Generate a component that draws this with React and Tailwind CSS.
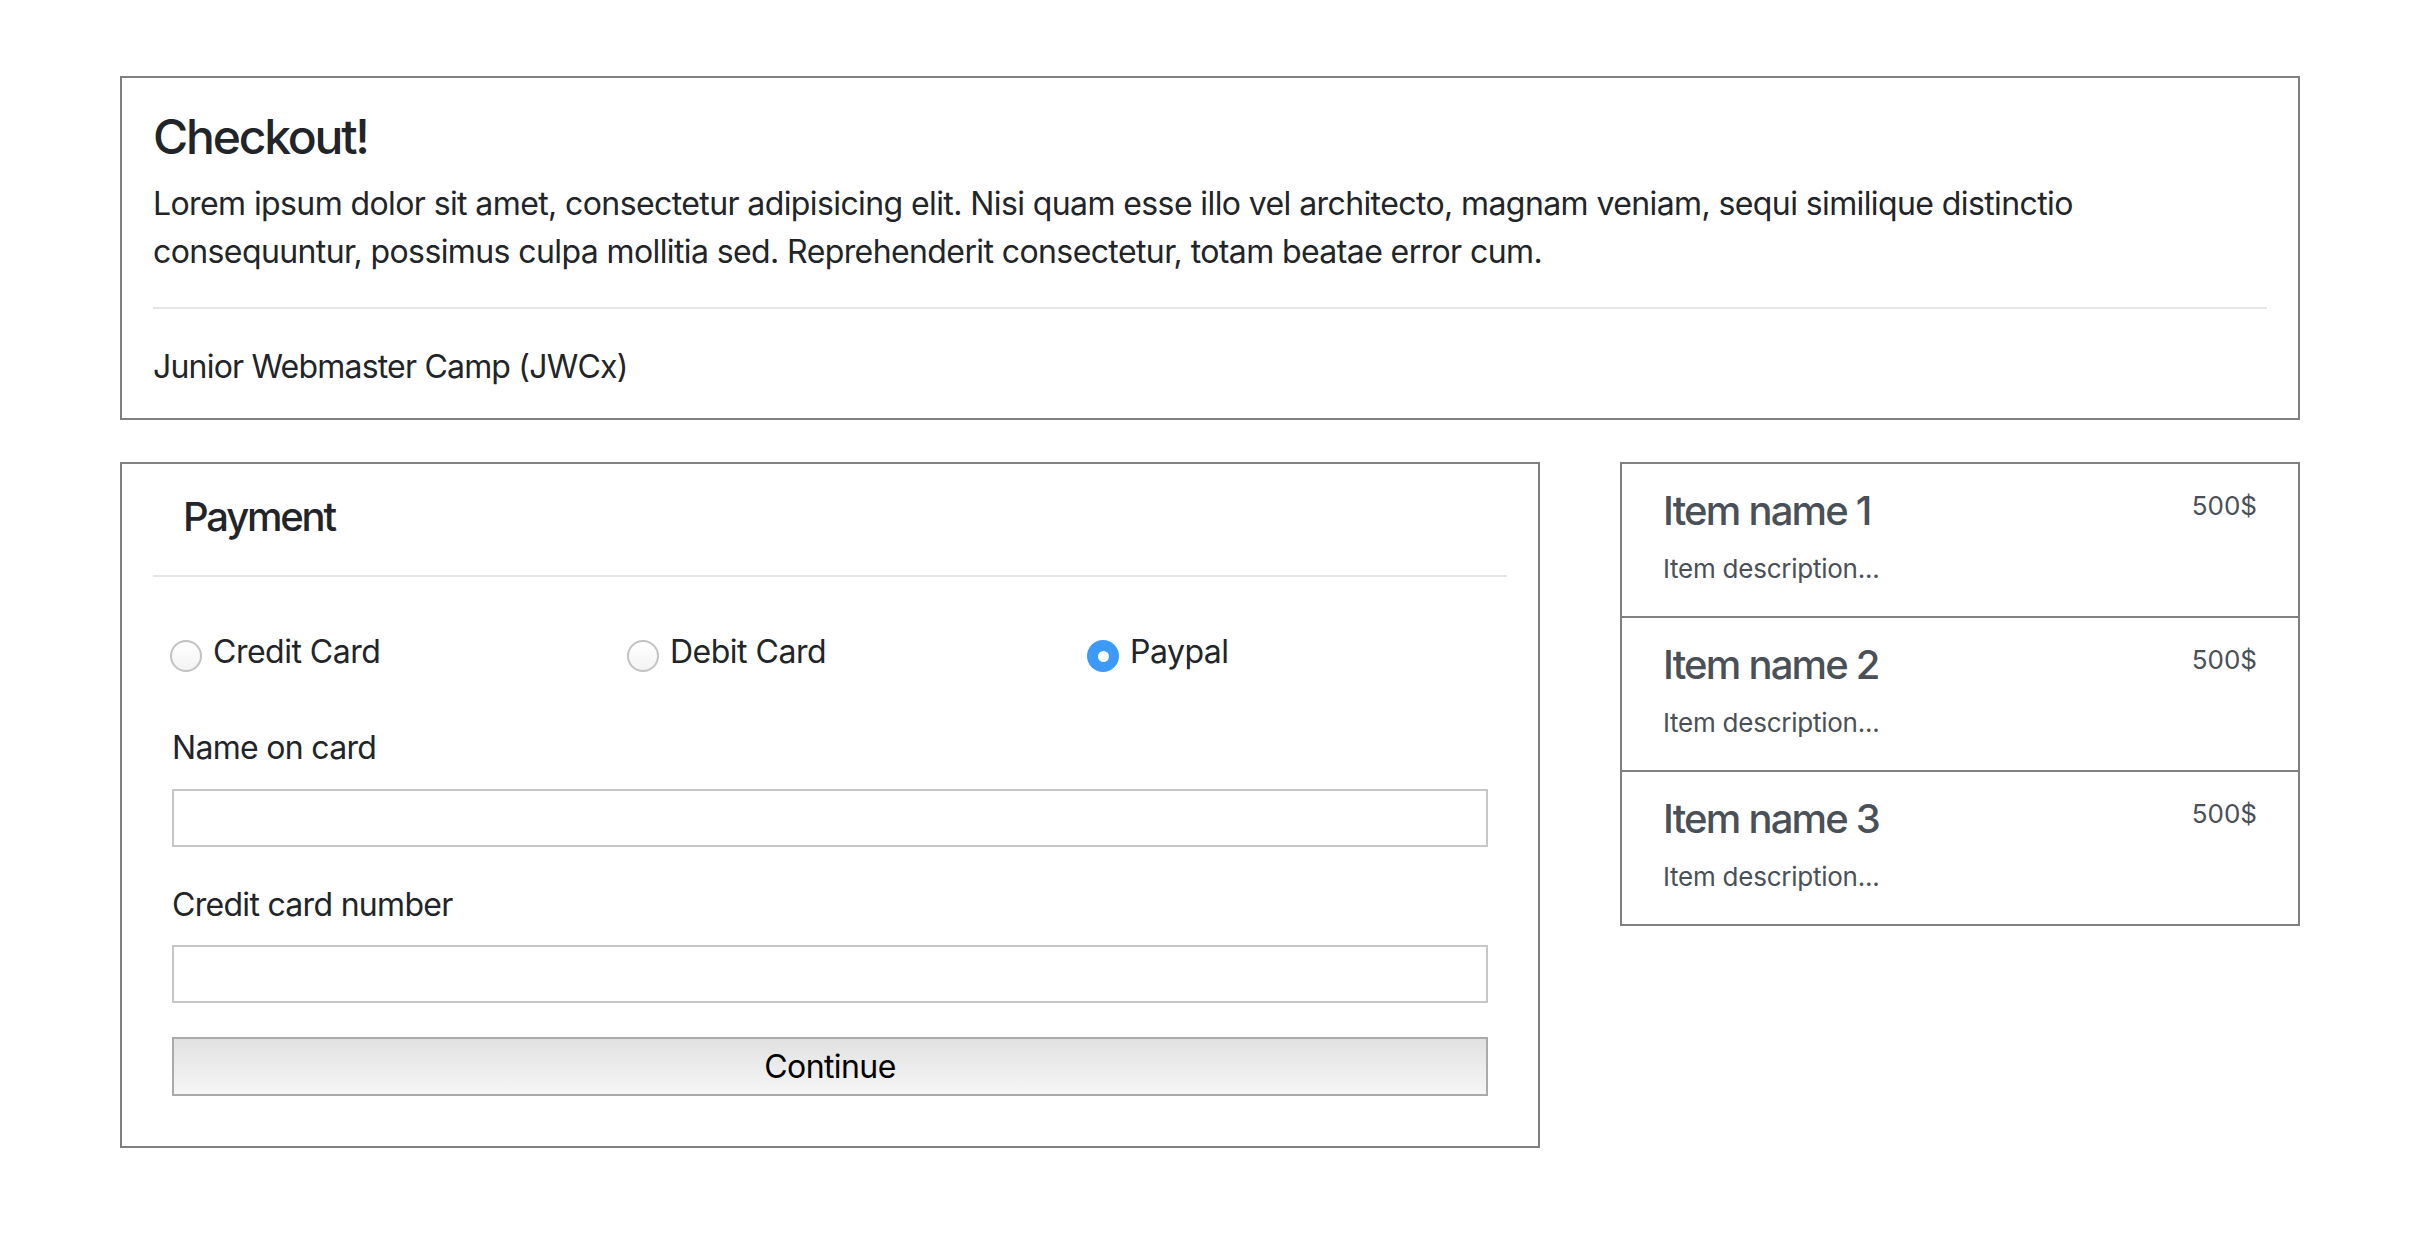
import React from "react";

const items = [
  { name: "Item name 1", price: "500$" },
  { name: "Item name 2", price: "500$" },
  { name: "Item name 3", price: "500$" },
];

function Radio({ label, checked, width }) {
  return (
    <label className={`flex items-start gap-[11px] ${width}`}>
      {checked ? (
        <span className="mt-[12px] flex h-[32px] w-[32px] items-center justify-center rounded-full bg-[#3c9afa]">
          <span className="h-[11px] w-[11px] rounded-full bg-white" />
        </span>
      ) : (
        <span className="mt-[12px] h-[32px] w-[32px] rounded-full border-2 border-[#c2c2c2] bg-linear-to-b from-white to-[#f3f3f3]" />
      )}
      <span className="text-[32px] leading-[48px] tracking-[-0.5px]">{label}</span>
    </label>
  );
}

export default function App() {
  return (
    <div
      className="min-h-screen bg-white pl-[120px] pt-[76px] text-[#212529]"
      style={{ fontFamily: "Inter, 'Noto Sans', sans-serif" }}
    >
      <div className="w-[2180px]">
        <div className="border-2 border-[#808080] px-[31px] pb-[27px] pt-[30px]">
          <h4 className="text-[48px] font-medium leading-[58px] tracking-[-2.2px]">Checkout!</h4>
          <p className="mt-[14px] max-w-[2010px] text-[32px] leading-[48px] tracking-[-0.6px]">
            Lorem ipsum dolor sit amet, consectetur adipisicing elit. Nisi quam esse illo vel architecto, magnam
            veniam, sequi similique distinctio consequuntur, possimus culpa mollitia sed. Reprehenderit consectetur,
            totam beatae error cum.
          </p>
          <div className="mt-[31px] h-[2px] bg-[#e6e6e6]" />
          <p className="mt-[34px] text-[32px] leading-[48px] tracking-[-0.8px]">Junior Webmaster Camp (JWCx)</p>
        </div>

        <div className="mt-[42px] flex items-start gap-[80px]">
          <div className="w-[1420px] border-2 border-[#808080] px-[31px] pb-[50px] pt-[29px]">
            <h5 className="pl-[30px] text-[40px] font-medium leading-[48px] tracking-[-2.2px]">Payment</h5>
            <div className="mt-[34px] h-[2px] bg-[#e6e6e6]" />

            <div className="mt-[51px] flex pl-[17px]">
              <Radio label="Credit Card" width="w-[457px]" />
              <Radio label="Debit Card" width="w-[460px]" />
              <Radio label="Paypal" checked width="w-[300px]" />
            </div>

            <div className="px-[19px] tracking-[-0.7px]">
              <label className="mt-[48px] block text-[32px] leading-[48px]">Name on card</label>
              <input
                type="text"
                className="mt-[17px] block h-[58px] w-full border-2 border-[#c6c6c6] bg-white outline-none"
              />
              <label className="mt-[34px] block text-[32px] leading-[48px]">Credit card number</label>
              <input
                type="text"
                className="mt-[16px] block h-[58px] w-full border-2 border-[#c6c6c6] bg-white outline-none"
              />
              <button className="mt-[34px] block h-[59px] w-full border-2 border-[#aaaaaa] bg-linear-to-b from-[#e1e1e1] to-[#f6f6f6] text-[32px] leading-[48px] tracking-[-0.6px] text-black">
                Continue
              </button>
            </div>
          </div>

          <div className="w-[680px] border-2 border-[#808080] text-[#495057]">
            {items.map((item, i) => (
              <div
                key={item.name}
                className={`px-[41px] pb-[28px] pt-[23px] ${i > 0 ? "border-t-2 border-[#808080]" : ""}`}
              >
                <div className="flex items-start justify-between">
                  <h5 className="text-[40px] font-medium leading-[48px] tracking-[-1.8px]">{item.name}</h5>
                  <span className="text-[26px] leading-[38px]">{item.price}</span>
                </div>
                <p className="mt-[15px] text-[26px] leading-[38px] tracking-[-0.25px]">Item description...</p>
              </div>
            ))}
          </div>
        </div>
      </div>
    </div>
  );
}
